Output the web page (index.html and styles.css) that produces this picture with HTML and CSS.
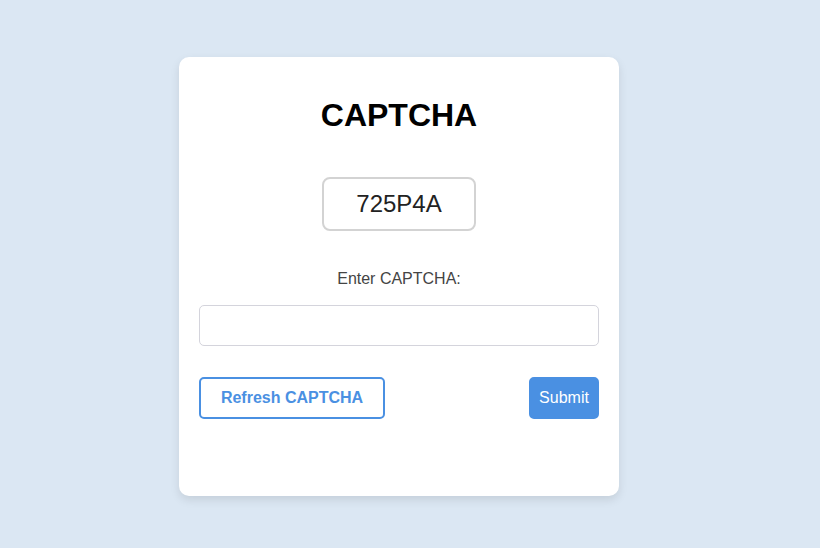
FILE: index.html
```html
<!DOCTYPE html>
<html lang="en">
<head>
<meta charset="utf-8">
<title>CAPTCHA</title>
<link rel="stylesheet" href="styles.css">
</head>
<body>
<div class="page">
  <div class="card">
    <h1 class="title">CAPTCHA</h1>
    <div class="code-wrap"><div class="code">725P4A</div></div>
    <label class="label" for="captcha-input">Enter CAPTCHA:</label>
    <input class="input" id="captcha-input" type="text">
    <div class="actions">
      <button class="btn btn-outline" type="button">Refresh CAPTCHA</button>
      <button class="btn btn-primary" type="button">Submit</button>
    </div>
  </div>
</div>
</body>
</html>
```
FILE: styles.css
```css
html, body {
  margin: 0;
  padding: 0;
}
body {
  background: #dbe7f3;
  font-family: "Liberation Sans", Arial, sans-serif;
  width: 820px;
  height: 548px;
  overflow: hidden;
}
.page {
  padding: 57px 0 0 179px;
}
.card {
  box-sizing: border-box;
  width: 440px;
  height: 439px;
  background: #fff;
  border-radius: 10px;
  box-shadow: 0 4px 10px rgba(0, 0, 0, 0.1);
  padding: 40px 20px 20px;
  display: flex;
  flex-direction: column;
}
.title {
  margin: 0;
  font-size: 32px;
  line-height: 37px;
  font-weight: bold;
  text-align: center;
  color: #000;
}
.code-wrap {
  display: flex;
  justify-content: center;
  margin-top: 43px;
}
.code {
  box-sizing: border-box;
  width: 154px;
  height: 54px;
  border: 2px solid #d3d3d3;
  border-radius: 8px;
  font-size: 24px;
  color: #222;
  display: flex;
  align-items: center;
  justify-content: center;
}
.label {
  display: block;
  margin-top: 39px;
  font-size: 16px;
  line-height: 18px;
  text-align: center;
  color: #444;
}
.input {
  box-sizing: border-box;
  margin-top: 17px;
  width: 400px;
  height: 41px;
  border: 1px solid #d4d4dc;
  border-radius: 5px;
  padding: 0 10px;
  font-family: inherit;
  font-size: 16px;
  outline: none;
}
.actions {
  margin-top: 31px;
  display: flex;
  justify-content: space-between;
}
.btn {
  box-sizing: border-box;
  height: 42px;
  border-radius: 5px;
  font-family: inherit;
  font-size: 16px;
  cursor: pointer;
}
.btn-outline {
  width: 186px;
  background: #fff;
  border: 2px solid #4a90e2;
  color: #4a90e2;
  font-weight: bold;
}
.btn-primary {
  width: 70px;
  background: #4a90e2;
  border: 2px solid #4a90e2;
  color: #fff;
}
```
